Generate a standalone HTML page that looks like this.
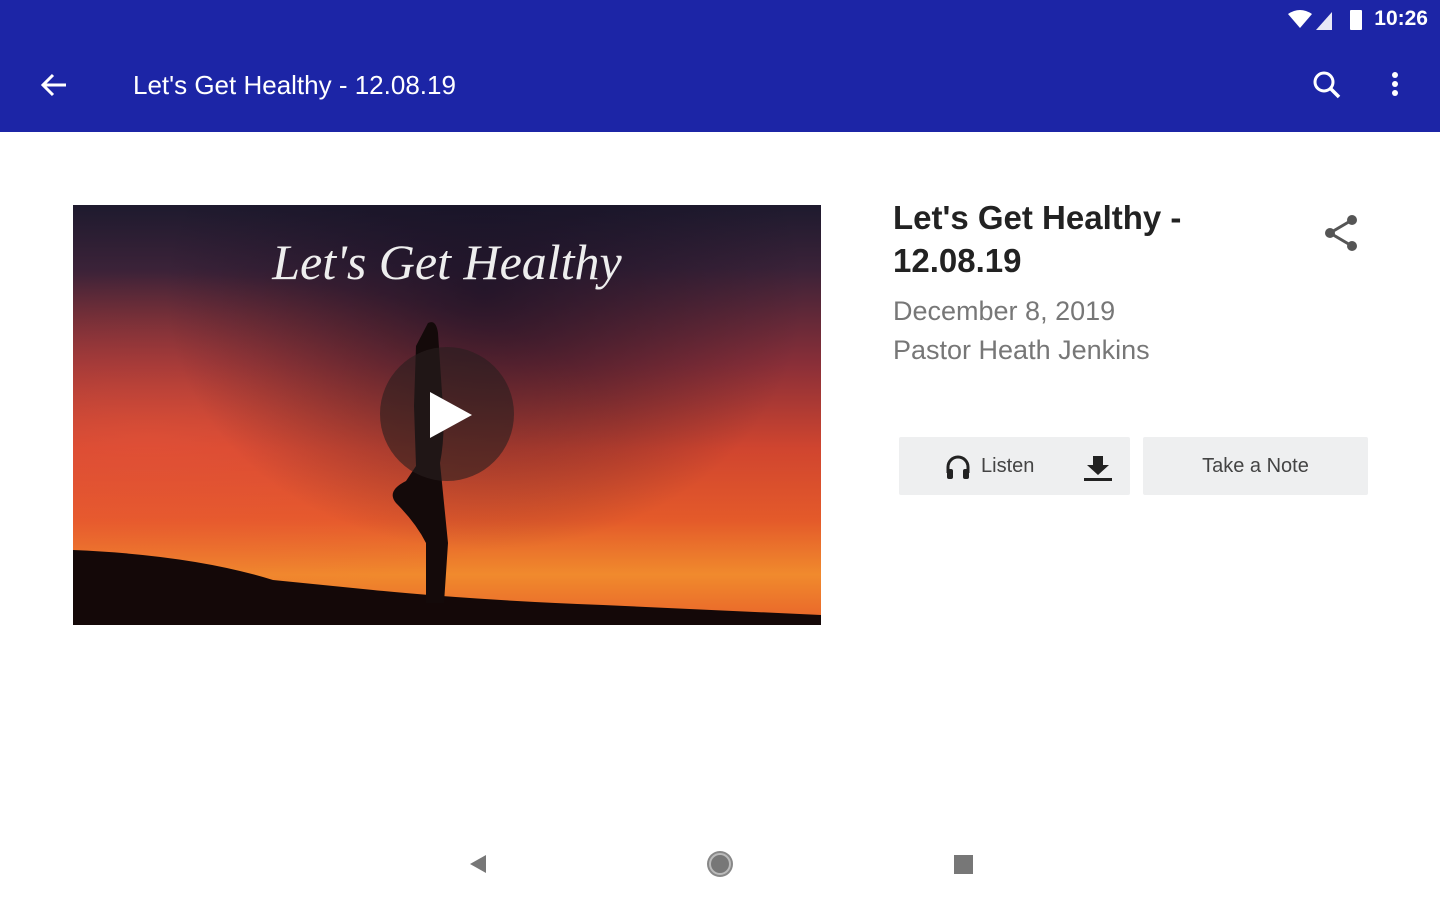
<!DOCTYPE html>
<html><head><meta charset="utf-8"><style>
body{margin:0;width:1440px;height:900px;background:#fff;font-family:"Liberation Sans",sans-serif;position:relative;overflow:hidden}
.bar{position:absolute;left:0;top:0;width:1440px;height:132px;background:#1c25a6;color:#fff}
.abs{position:absolute}
.btn{position:absolute;top:437px;height:58px;background:#eeeff0;color:#444;font-size:20px;display:flex;align-items:center;border-radius:2px}
</style></head><body>
<div class="bar">
 <div class="abs" style="right:12px;top:7px;font-size:21px;font-weight:bold">10:26</div>
 <svg class="abs" style="left:1286px;top:8px" width="84" height="24"><path d="M2 6 Q14 -2 26 6 L14 20Z" fill="#fff"/><path d="M30 22 L46 22 L46 4Z" fill="#fff" opacity=".9"/><rect x="64" y="2" width="12" height="20" rx="1" fill="#fff"/></svg>
 <svg class="abs" style="left:40px;top:72px" width="28" height="26" viewBox="0 0 28 26"><path d="M26 13H4M13 3L3 13l10 10" stroke="#fff" stroke-width="3" fill="none"/></svg>
 <div class="abs" style="left:133px;top:70px;font-size:26px">Let's Get Healthy - 12.08.19</div>
 <svg class="abs" style="left:1312px;top:70px" width="30" height="30"><circle cx="12" cy="12" r="9" stroke="#fff" stroke-width="3" fill="none"/><path d="M19 19l8 8" stroke="#fff" stroke-width="3.5"/></svg>
 <svg class="abs" style="left:1390px;top:71px" width="10" height="28"><circle cx="5" cy="4" r="3" fill="#fff"/><circle cx="5" cy="13" r="3" fill="#fff"/><circle cx="5" cy="22" r="3" fill="#fff"/></svg>
</div>
<div class="abs" style="left:73px;top:205px;width:748px;height:420px;overflow:hidden;background:linear-gradient(180deg,#1e1a2e 0%,#3a2238 15%,#8a2f38 38%,#d0452f 58%,#e45a2a 75%,#f08a2d 88%,#e9622a 100%)">
 <div class="abs" style="left:0;top:0;width:748px;height:420px;background:radial-gradient(ellipse at 55% 20%,rgba(20,15,35,.7),transparent 55%),radial-gradient(ellipse at 10% 55%,rgba(240,90,60,.5),transparent 50%)"></div>
 <svg class="abs" style="left:0;top:0" width="748" height="420"><path d="M0 345 Q120 350 200 375 L300 385 Q400 395 530 400 L748 410 L748 420 L0 420Z" fill="#140808"/><path d="M355 118 q8 -4 10 10 l4 60 q4 40 -2 70 l8 80 l-4 60 l-18 0 l0 -60 q-10 -20 -30 -40 q-10 -12 10 -22 l10 -15 l-2 -60 l2 -60 z" fill="#140a0a"/></svg>
 <div class="abs" style="left:0;width:748px;top:28px;text-align:center;font-family:'Liberation Serif',serif;font-style:italic;font-size:50px;color:#eee">Let's Get Healthy</div>
 <div class="abs" style="left:307px;top:142px;width:134px;height:134px;border-radius:50%;background:rgba(40,30,30,.6)"></div>
 <svg class="abs" style="left:355px;top:185px" width="46" height="50"><path d="M2 2L44 25L2 48Z" fill="#fff"/></svg>
</div>
<div class="abs" style="left:893px;top:196px;font-size:33px;font-weight:bold;color:#222;line-height:43px">Let's Get Healthy -<br>12.08.19</div>
<svg class="abs" style="left:1322px;top:213px" width="40" height="40"><circle cx="30" cy="7" r="5" fill="#555"/><circle cx="8" cy="20" r="5" fill="#555"/><circle cx="30" cy="33" r="5" fill="#555"/><path d="M30 7L8 20L30 33" stroke="#555" stroke-width="3" fill="none"/></svg>
<div class="abs" style="left:893px;top:292px;font-size:27px;color:#777;line-height:39px">December 8, 2019<br>Pastor Heath Jenkins</div>
<div class="btn" style="left:899px;width:231px">
 <svg class="abs" style="left:45px;top:16px" width="28" height="28" viewBox="0 0 28 28"><path d="M4 20V14a10 10 0 0 1 20 0v6" stroke="#222" stroke-width="3" fill="none"/><rect x="3" y="16" width="6" height="10" rx="2" fill="#222"/><rect x="19" y="16" width="6" height="10" rx="2" fill="#222"/></svg>
 <span class="abs" style="left:82px">Listen</span>
 <svg class="abs" style="left:184px;top:17px" width="30" height="28"><path d="M10 2h10v9h6L15 21L4 11h6z" fill="#222"/><rect x="1" y="24" width="28" height="3" fill="#222"/></svg>
</div>
<div class="btn" style="left:1143px;width:225px;justify-content:center">Take a Note</div>
<svg class="abs" style="left:468px;top:853px" width="20" height="22"><path d="M18 2L2 11L18 20Z" fill="#777"/></svg>
<svg class="abs" style="left:704px;top:848px" width="32" height="32"><circle cx="16" cy="16" r="13" fill="#888"/><circle cx="16" cy="16" r="10" fill="#777" stroke="#bbb" stroke-width="2"/></svg>
<div class="abs" style="left:954px;top:855px;width:19px;height:19px;background:#777"></div>
</body></html>
